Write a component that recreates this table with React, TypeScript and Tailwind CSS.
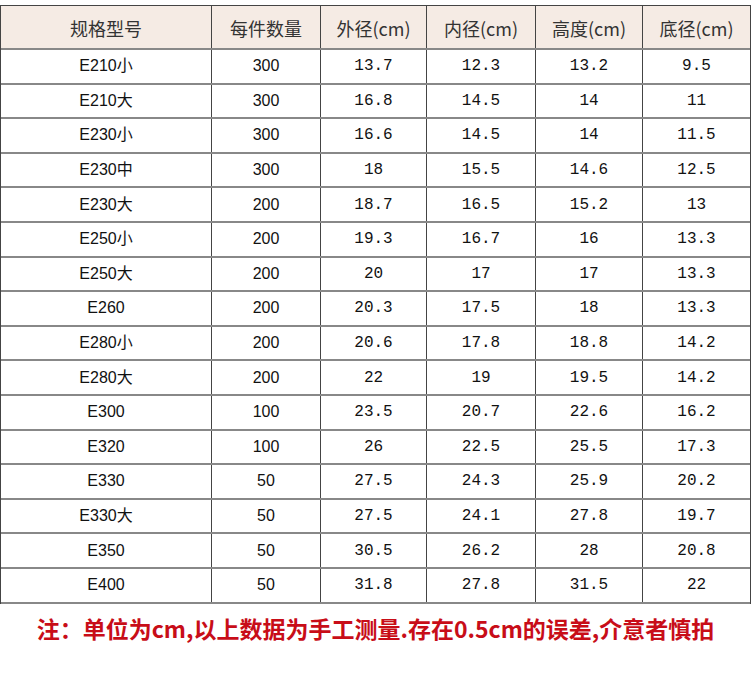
const rows: string[][] = [
  ['E210小', '300', '13.7', '12.3', '13.2', '9.5'],
  ['E210大', '300', '16.8', '14.5', '14', '11'],
  ['E230小', '300', '16.6', '14.5', '14', '11.5'],
  ['E230中', '300', '18', '15.5', '14.6', '12.5'],
  ['E230大', '200', '18.7', '16.5', '15.2', '13'],
  ['E250小', '200', '19.3', '16.7', '16', '13.3'],
  ['E250大', '200', '20', '17', '17', '13.3'],
  ['E260', '200', '20.3', '17.5', '18', '13.3'],
  ['E280小', '200', '20.6', '17.8', '18.8', '14.2'],
  ['E280大', '200', '22', '19', '19.5', '14.2'],
  ['E300', '100', '23.5', '20.7', '22.6', '16.2'],
  ['E320', '100', '26', '22.5', '25.5', '17.3'],
  ['E330', '50', '27.5', '24.3', '25.9', '20.2'],
  ['E330大', '50', '27.5', '24.1', '27.8', '19.7'],
  ['E350', '50', '30.5', '26.2', '28', '20.8'],
  ['E400', '50', '31.8', '27.8', '31.5', '22'],
];

const headers = ['规格型号', '每件数量', '外径(cm)', '内径(cm)', '高度(cm)', '底径(cm)'];

const gridCols = 'grid grid-cols-[211px_109px_106px_109px_107px_107px]';

function App() {
  return (
    <div className="w-[751px] h-[676px] bg-white pt-[5px]">
      <div className="border-l border-r border-t border-[#444]">
        <div className={`${gridCols} h-[44px] bg-[#f5ebe4] border-b-2 border-[#888]`}>
          {headers.map((h, i) => (
            <div
              key={h}
              className={`flex items-center justify-center pt-[3px] text-[18px] text-[#333] font-['Noto_Sans_CJK_SC',sans-serif] ${
                i < 5 ? 'border-r border-[#444]' : ''
              }`}
            >
              {h}
            </div>
          ))}
        </div>
        {rows.map((row, r) => (
          <div
            key={r}
            className={`${gridCols} h-[34.6px] border-b-2 border-[#888]`}
          >
            {row.map((c, i) => (
              <div
                key={i}
                className={`flex items-center justify-center text-[#111] ${
                  i < 2
                    ? "text-[16px] font-['Liberation_Sans','Noto_Sans_CJK_SC',sans-serif]"
                    : "text-[16px] font-['Liberation_Mono',monospace]"
                } ${i < 5 ? 'border-r border-[#444]' : ''}`}
              >
                {c}
              </div>
            ))}
          </div>
        ))}
      </div>
      <div className="mt-[7px] text-center text-[23px] font-bold text-[#c80d18] font-['Noto_Sans_CJK_SC',sans-serif]">
        注：单位为cm,以上数据为手工测量.存在0.5cm的误差,介意者慎拍
      </div>
    </div>
  );
}

export default App;
